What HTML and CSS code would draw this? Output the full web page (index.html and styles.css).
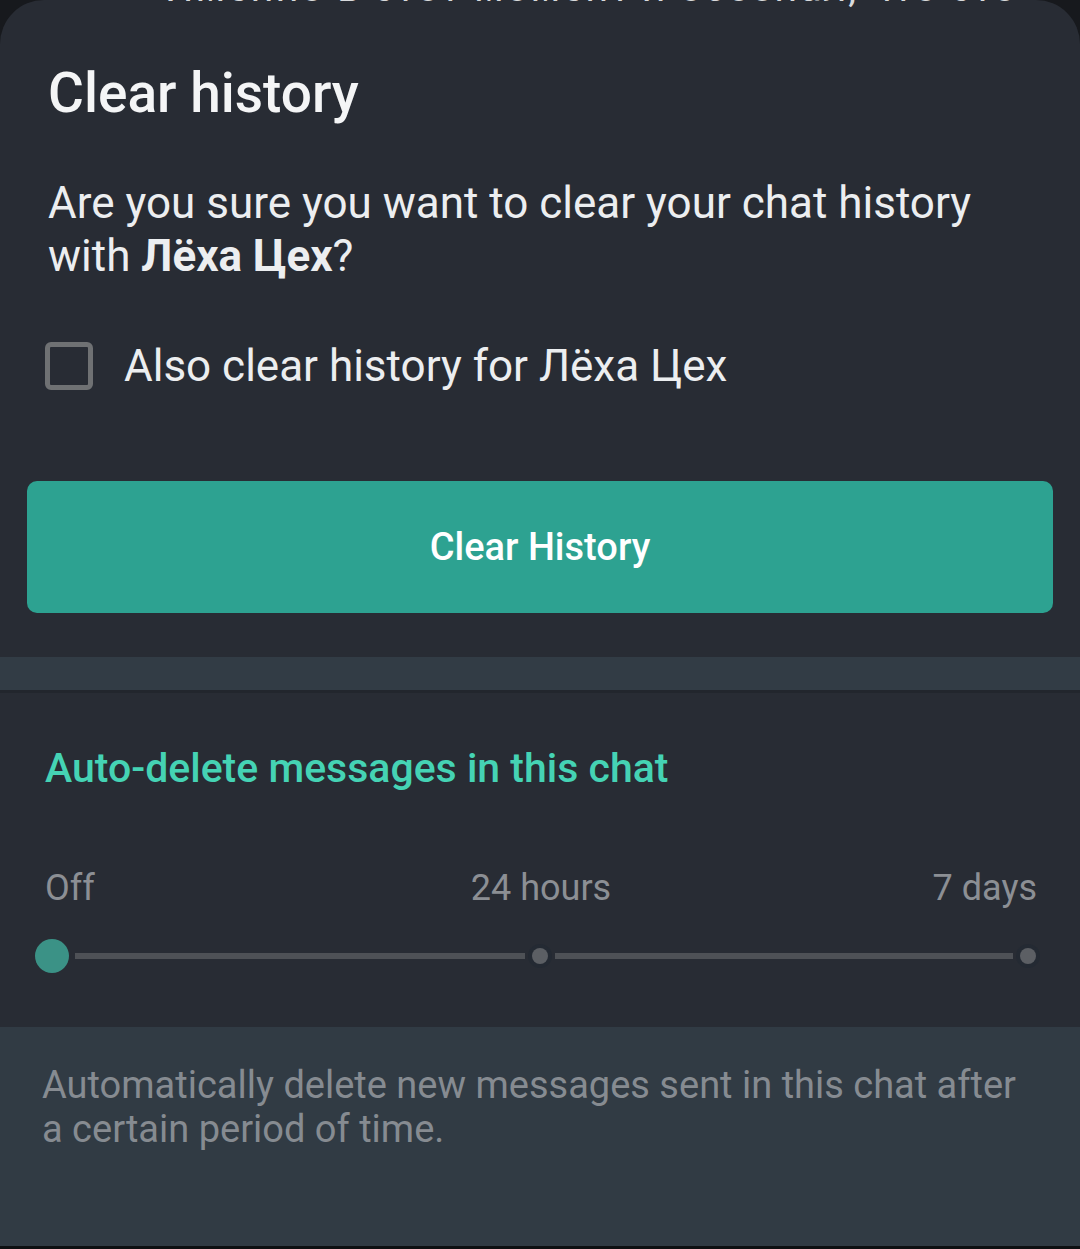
FILE: index.html
```html
<!DOCTYPE html>
<html lang="en">
<head>
  <meta charset="UTF-8">
  <title>Clear history</title>
  <link rel="stylesheet" href="styles.css">
</head>
<body>

  <div class="behind">Именно в этот момент я осознал, что это</div>

  <div class="sheet">
    <div class="dialog">
      <h1>Clear history</h1>
      <p class="question">Are you sure you want to clear your chat history with <b>Лёха Цех</b>?</p>

      <label class="check">
        <span class="box"></span>
        Also clear history for Лёха Цех
      </label>

      <button class="clear-btn">Clear History</button>
    </div>

    <div class="divider"></div>

    <div class="auto-delete">
      <h2>Auto-delete messages in this chat</h2>

      <div class="labels">
        <span class="first">Off</span>
        <span class="middle">24 hours</span>
        <span class="last">7 days</span>
      </div>

      <div class="slider">
        <span class="thumb"></span>
        <span class="track one"></span>
        <span class="dot"></span>
        <span class="track two"></span>
        <span class="dot"></span>
      </div>
    </div>

    <div class="hint">
      Automatically delete new messages sent in this chat after a certain period of time.
    </div>
  </div>

</body>
</html>
```

FILE: styles.css
```css
body {
  margin: 0;
  background-color: #17191d;
  font-family: Roboto, "Noto Sans", sans-serif;
  width: 1080px;
  height: 1249px;
  overflow: hidden;
  position: relative;
}

/* text of the chat peeking above the sheet */
.behind {
  position: absolute;
  top: -36px;
  left: 165px;
  font-size: 40px;
  letter-spacing: 2px;
  color: #d8dadc;
  z-index: 2;
  white-space: nowrap;
}

.sheet {
  background-color: #282c34;
  border-radius: 44px 44px 0 0;
  height: 1249px;
  display: flex;
  flex-direction: column;
}

.dialog {
  padding: 58px 27px 44px 27px;
}

h1 {
  margin: 0 0 0 21px;
  font-size: 55px;
  font-weight: 500;
  color: #f4f5f6;
  line-height: 70px;
}

.question {
  margin: 49px 0 0 21px;
  font-size: 44px;
  line-height: 53px;
  color: #eceef0;
}

.question b {
  font-weight: 700;
}

.check {
  display: flex;
  align-items: center;
  gap: 31px;
  margin: 57px 0 0 18px;
  font-size: 44px;
  color: #eceef0;
}

.box {
  width: 38px;
  height: 38px;
  border: 5px solid #6f7173;
  border-radius: 6px;
}

.clear-btn {
  display: block;
  width: 100%;
  height: 132px;
  margin-top: 89px;
  border: none;
  border-radius: 10px;
  background-color: #2da291;
  color: #ffffff;
  font-family: Roboto, sans-serif;
  font-size: 38px;
  font-weight: 500;
}

.divider {
  height: 33px;
  background-color: #323c45;
  border-bottom: 3px solid #22262d;
}

.auto-delete {
  padding: 50px 43px 0 45px;
  height: 284px;
}

h2 {
  margin: 0;
  font-size: 41px;
  font-weight: 500;
  color: #45d3b4;
  line-height: 50px;
}

.labels {
  display: grid;
  grid-template-columns: 1fr auto 1fr;
  margin-top: 74px;
  font-size: 36px;
  color: #8c8f94;
}

.labels .last {
  text-align: right;
}

.slider {
  display: flex;
  align-items: center;
  width: 1001px;
  margin: 30px 0 0 -10px;
}

.thumb {
  width: 34px;
  height: 34px;
  border-radius: 50%;
  background-color: #3b9286;
  flex: none;
}

.track {
  height: 6px;
  background-color: #4e5156;
  margin: 0 7px;
}

.track.one {
  width: 450px;
  margin-left: 6px;
}

.track.two {
  width: 458px;
}

.dot {
  width: 16px;
  height: 16px;
  border-radius: 50%;
  background-color: #5c5f64;
  box-shadow: 0 0 0 4px #242a33;
  flex: none;
}

.hint {
  flex: 1;
  background-color: #313b44;
  padding: 36px 50px 0 42px;
  font-size: 38px;
  line-height: 44px;
  color: #868b91;
  border-bottom: 3px solid #0e1012;
}
```
